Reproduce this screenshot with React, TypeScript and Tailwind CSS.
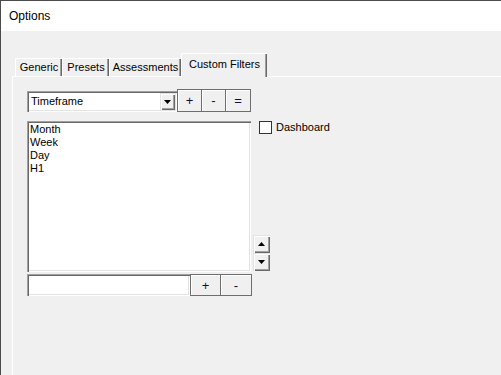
import React from "react";

const sunken =
  "shadow-[inset_1px_1px_0_#a0a0a0,inset_2px_2px_0_#696969,inset_-1px_-1px_0_#ffffff,inset_-2px_-2px_0_#e3e3e3]";
const raised =
  "shadow-[inset_1px_1px_0_#e3e3e3,inset_2px_2px_0_#ffffff,inset_-1px_-1px_0_#696969,inset_-2px_-2px_0_#a0a0a0]";

function DownTri() {
  return (
    <svg width="7" height="4" viewBox="0 0 7 4">
      <path d="M0 0H7L3.5 4Z" fill="#000" />
    </svg>
  );
}
function UpTri() {
  return (
    <svg width="7" height="4" viewBox="0 0 7 4">
      <path d="M0 4H7L3.5 0Z" fill="#000" />
    </svg>
  );
}

function Tab({ label, w }: { label: string; w: string }) {
  return (
    <div
      className={`${w} h-[18px] flex items-center justify-center border-l border-t border-white shadow-[inset_-1px_0_0_#696969,inset_-2px_0_0_#a0a0a0] leading-[13px]`}
    >
      {label}
    </div>
  );
}

function Btn({ label, w, h }: { label: string; w: string; h: string }) {
  return (
    <div
      className={`${w} ${h} flex items-center justify-center border border-[#6e6e6e] bg-[#f0f0f0] shadow-[inset_1px_1px_0_#ffffff] text-[13px] leading-none text-[#101040]`}
    >
      {label}
    </div>
  );
}

export default function App() {
  return (
    <div
      className="w-[501px] h-[375px] border-l border-t border-[#4b4b4b] bg-[#f0f0f0] flex flex-col overflow-hidden text-[11px] text-black"
      style={{ fontFamily: '"Liberation Sans", Arial, sans-serif' }}
    >
      <div className="h-[30px] bg-white px-[8px] flex items-center text-[12px]">Options</div>
      <div className="flex-1 flex flex-col pl-[11px] pt-[22px]">
        <div className="flex items-end h-[23px] pl-[3px]">
          <Tab label="Generic" w="w-[47px]" />
          <Tab label="Presets" w="w-[47px]" />
          <Tab label="Assessments" w="w-[72px]" />
          <div className="relative z-10 w-[86px] h-[24px] -mb-[1px] flex justify-center pt-[4px] border-l border-t border-white bg-[#f0f0f0] shadow-[inset_-1px_0_0_#696969,inset_-2px_0_0_#a0a0a0] leading-[13px]">
            Custom Filters
          </div>
        </div>
        <div className="flex-1 border-l border-t border-white pl-[14px] pt-[12px] flex flex-col">
          <div className="flex items-start">
            <div className={`mt-[2px] w-[150px] h-[21px] bg-white ${sunken} flex items-center pl-[4px] pr-[2px]`}>
              <span className="flex-1 leading-[13px]">Timeframe</span>
              <div className={`w-[15px] h-[17px] bg-[#f0f0f0] ${raised} flex items-center justify-center`}>
                <DownTri />
              </div>
            </div>
            <Btn label="+" w="w-[25px]" h="h-[23px]" />
            <div className="-ml-px">
              <Btn label="-" w="w-[25px]" h="h-[23px]" />
            </div>
            <div className="-ml-px">
              <Btn label="=" w="w-[26px]" h="h-[23px]" />
            </div>
          </div>
          <div className="flex mt-[9px]">
            <div className={`w-[224px] h-[151px] bg-white ${sunken} pt-[2px] pl-[3px] leading-[13px]`}>
              <div>Month</div>
              <div>Week</div>
              <div>Day</div>
              <div>H1</div>
            </div>
            <div className="ml-[2px] h-[151px] flex flex-col justify-between pb-[1px]">
              <div className="flex items-center pl-[6px]">
                <div className="w-[13px] h-[13px] bg-white border border-[#333333]" />
                <span className="ml-[4px] leading-[13px]">Dashboard</span>
              </div>
              <div className="flex flex-col">
                <div className={`w-[17px] h-[18px] bg-[#f0f0f0] ${raised} flex items-center justify-center`}>
                  <UpTri />
                </div>
                <div className={`w-[17px] h-[18px] bg-[#f0f0f0] ${raised} flex items-center justify-center`}>
                  <DownTri />
                </div>
              </div>
            </div>
          </div>
          <div className="flex mt-[2px]">
            <div className={`w-[163px] h-[22px] bg-white ${sunken}`} />
            <Btn label="+" w="w-[31px]" h="h-[22px]" />
            <div className="-ml-px">
              <Btn label="-" w="w-[32px]" h="h-[22px]" />
            </div>
          </div>
        </div>
      </div>
    </div>
  );
}
